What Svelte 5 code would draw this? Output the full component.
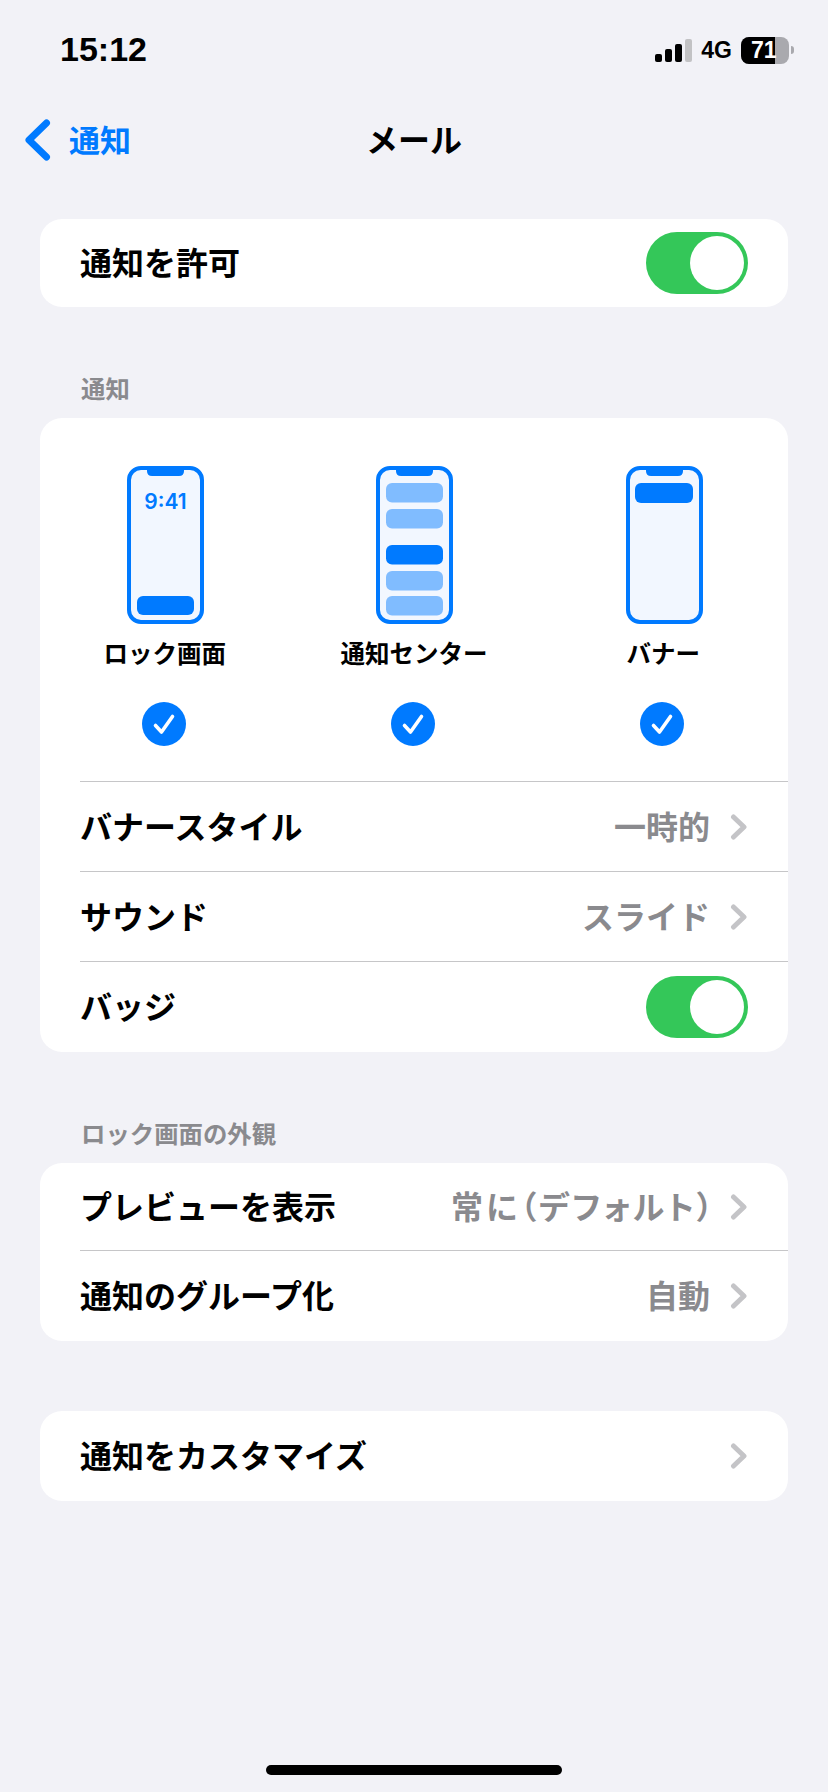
<script>
  const previews = [
    { label: 'ロック画面', kind: 'lock' },
    { label: '通知センター', kind: 'center' },
    { label: 'バナー', kind: 'banner' }
  ];
  const centerBlocks = [
    { y: 17, dark: false },
    { y: 43, dark: false },
    { y: 79, dark: true },
    { y: 105, dark: false },
    { y: 130, dark: false }
  ];
</script>

<div class="page">
  <div class="status">
    <span class="time">15:12</span>
    <div class="status-right">
      <div class="signal">
        <i class="b1"></i><i class="b2"></i><i class="b3"></i><i class="b4"></i>
      </div>
      <span class="net">4G</span>
      <div class="battery">
        <div class="bat-body"><div class="bat-fill"><span>71</span></div></div>
        <div class="bat-nub"></div>
      </div>
    </div>
  </div>

  <div class="nav">
    <div class="back">
      <svg width="28" height="42" viewBox="0 0 28 42"><path d="M22.5 4 L5 21 L22.5 38" fill="none" stroke="#007AFF" stroke-width="7" stroke-linecap="round" stroke-linejoin="round"/></svg>
      <span>通知</span>
    </div>
    <div class="title">メール</div>
  </div>

  <div class="card">
    <div class="row first">
      <span class="name">通知を許可</span>
      <div class="toggle"><div class="knob"></div></div>
    </div>
  </div>

  <div class="heading">通知</div>
  <div class="card">
    <div class="previews">
      {#each previews as p}
        <div class="col">
          <svg class="phone" width="77" height="158" viewBox="0 0 77 158">
            <rect x="2" y="2" width="73" height="154" rx="12" fill="#F2F7FF" stroke="#007AFF" stroke-width="4"/>
            <path d="M20 3 H57 V5 Q57 10 52 10 H25 Q20 10 20 5 Z" fill="#007AFF"/>
            {#if p.kind === 'lock'}
              <text x="38.5" y="43" text-anchor="middle" class="t941">9:41</text>
              <rect x="10" y="130" width="57" height="19" rx="6" fill="#007AFF"/>
            {:else if p.kind === 'center'}
              {#each centerBlocks as b}
                <rect x="10" y={b.y} width="57" height="19.5" rx="6" fill={b.dark ? '#007AFF' : '#80BCFF'}/>
              {/each}
            {:else}
              <rect x="9" y="17" width="58" height="20" rx="6" fill="#007AFF"/>
            {/if}
          </svg>
          <div class="plabel">{p.label}</div>
          <svg class="check" width="44" height="44" viewBox="0 0 44 44">
            <circle cx="22" cy="22" r="22" fill="#007AFF"/>
            <path d="M13.5 23.5 L19.5 30 L30.5 14.5" fill="none" stroke="#fff" stroke-width="3.6" stroke-linecap="round" stroke-linejoin="round"/>
          </svg>
        </div>
      {/each}
    </div>
    <div class="row">
      <span class="name">バナースタイル</span>
      <span class="value">一時的</span>
      {@render chev()}
    </div>
    <div class="row">
      <span class="name">サウンド</span>
      <span class="value">スライド</span>
      {@render chev()}
    </div>
    <div class="row last">
      <span class="name">バッジ</span>
      <div class="toggle"><div class="knob"></div></div>
    </div>
  </div>

  <div class="heading">ロック画面の外観</div>
  <div class="card">
    <div class="row first compact">
      <span class="name">プレビューを表示</span>
      <span class="value tight">常に（デフォルト）</span>
      {@render chev()}
    </div>
    <div class="row last">
      <span class="name">通知のグループ化</span>
      <span class="value">自動</span>
      {@render chev()}
    </div>
  </div>

  <div class="card solo">
    <div class="row first tall">
      <span class="name">通知をカスタマイズ</span>
      {@render chev()}
    </div>
  </div>

  <div class="home"></div>
</div>

{#snippet chev()}
  <svg class="chev" width="18" height="26" viewBox="0 0 18 26"><path d="M3.5 3 L14 13 L3.5 23" fill="none" stroke="#C4C4C7" stroke-width="5" stroke-linecap="round" stroke-linejoin="round"/></svg>
{/snippet}

<style>
  :global(body) {
    margin: 0;
    background: #F2F2F7;
  }
  .page {
    width: 828px;
    height: 1792px;
    display: flex;
    flex-direction: column;
    background: #F2F2F7;
    font-family: "Noto Sans CJK JP", "Liberation Sans", sans-serif;
    color: #000;
    overflow: hidden;
  }
  .status {
    height: 100px;
    display: flex;
    justify-content: space-between;
    align-items: center;
    padding: 0 34px 0 60px;
    box-sizing: border-box;
  }
  .time {
    font-family: "Liberation Sans", sans-serif;
    font-weight: 700;
    font-size: 34px;
    line-height: 1;
    margin-bottom: 2px;
  }
  .status-right {
    display: flex;
    align-items: center;
    gap: 9px;
  }
  .signal {
    display: flex;
    align-items: flex-end;
    gap: 3px;
    height: 23px;
  }
  .signal i {
    display: block;
    width: 7px;
    border-radius: 2px;
    background: #000;
  }
  .b1 { height: 8px; }
  .b2 { height: 13px; }
  .b3 { height: 18px; }
  .signal .b4 { height: 23px; background: #C2C2C4; }
  .net {
    font-family: "Liberation Sans", sans-serif;
    font-weight: 700;
    font-size: 23px;
    line-height: 1;
    margin-top: 1px;
  }
  .battery {
    display: flex;
    align-items: center;
    gap: 2px;
  }
  .bat-body {
    width: 48px;
    height: 27px;
    border-radius: 8px;
    background: #A9A9AE;
    overflow: hidden;
  }
  .bat-fill {
    width: 34px;
    height: 27px;
    background: #000;
    display: flex;
    align-items: center;
    padding-left: 10px;
    box-sizing: border-box;
  }
  .bat-fill span {
    font-family: "Liberation Sans", sans-serif;
    font-weight: 700;
    font-size: 23px;
    line-height: 1;
    color: #fff;
  }
  .bat-nub {
    width: 3px;
    height: 8px;
    border-radius: 0 3px 3px 0;
    background: #A9A9AE;
  }
  .nav {
    position: relative;
    height: 80px;
    display: flex;
    align-items: center;
    justify-content: center;
  }
  .back {
    position: absolute;
    left: 24px;
    top: 0;
    bottom: 0;
    display: flex;
    align-items: center;
    gap: 17px;
    color: #007AFF;
    font-size: 31px;
    font-weight: 700;
  }
  .back svg { display: block; }
  .back span { margin-bottom: 4px; }
  .title {
    font-size: 32px;
    font-weight: 700;
    margin-bottom: 4px;
  }
  .card {
    margin: 0 40px;
    background: #fff;
    border-radius: 22px;
    overflow: hidden;
  }
  .nav + .card { margin-top: 39px; }
  .solo { margin-top: 70px; }
  .heading {
    margin: 66px 40px 15px 81px;
    height: 30px;
    line-height: 30px;
    font-size: 24.4px;
    font-weight: 700;
    color: #8A8A8E;
  }
  .previews {
    display: grid;
    grid-template-columns: repeat(3, 1fr);
    padding: 48px 0 35px;
  }
  .col {
    display: flex;
    flex-direction: column;
    align-items: center;
  }
  .phone, .check { display: block; }
  .phone { margin-left: 2px; }
  .t941 {
    font-family: "Inter", sans-serif;
    font-weight: 600;
    font-size: 21px;
    fill: #007AFF;
  }
  .plabel {
    margin-top: 13px;
    height: 32px;
    line-height: 32px;
    font-size: 24.5px;
    font-weight: 700;
    white-space: nowrap;
  }
  .check { margin-top: 33px; margin-right: 2px; }
  .row {
    height: 90px;
    margin-left: 40px;
    padding-right: 40px;
    border-top: 1px solid #C6C6C8;
    box-sizing: border-box;
    display: flex;
    align-items: center;
  }
  .row.first {
    height: 88px;
    border-top: 0;
  }
  .row.first.compact { height: 87px; }
  .row.last { height: 91px; }
  .row.tall { height: 90px; }
  .name {
    font-size: 32px;
    font-weight: 700;
    margin-right: auto;
    margin-bottom: 4px;
    white-space: nowrap;
  }
  .value {
    font-size: 32px;
    font-weight: 700;
    color: #8A8A8E;
    margin-right: 20px;
    margin-bottom: 4px;
    white-space: nowrap;
  }
  .value.tight {
    font-feature-settings: "palt";
    letter-spacing: 3px;
    margin-right: 14px;
  }
  .chev { display: block; flex: none; }
  .toggle {
    width: 102px;
    height: 62px;
    border-radius: 31px;
    background: #34C759;
    display: flex;
    align-items: center;
    justify-content: flex-end;
    padding-right: 4px;
    box-sizing: border-box;
  }
  .knob {
    width: 54px;
    height: 54px;
    border-radius: 50%;
    background: #fff;
  }
  .home {
    width: 296px;
    height: 10px;
    border-radius: 5px;
    background: #000;
    margin: auto auto 17px 266px;
  }
</style>
